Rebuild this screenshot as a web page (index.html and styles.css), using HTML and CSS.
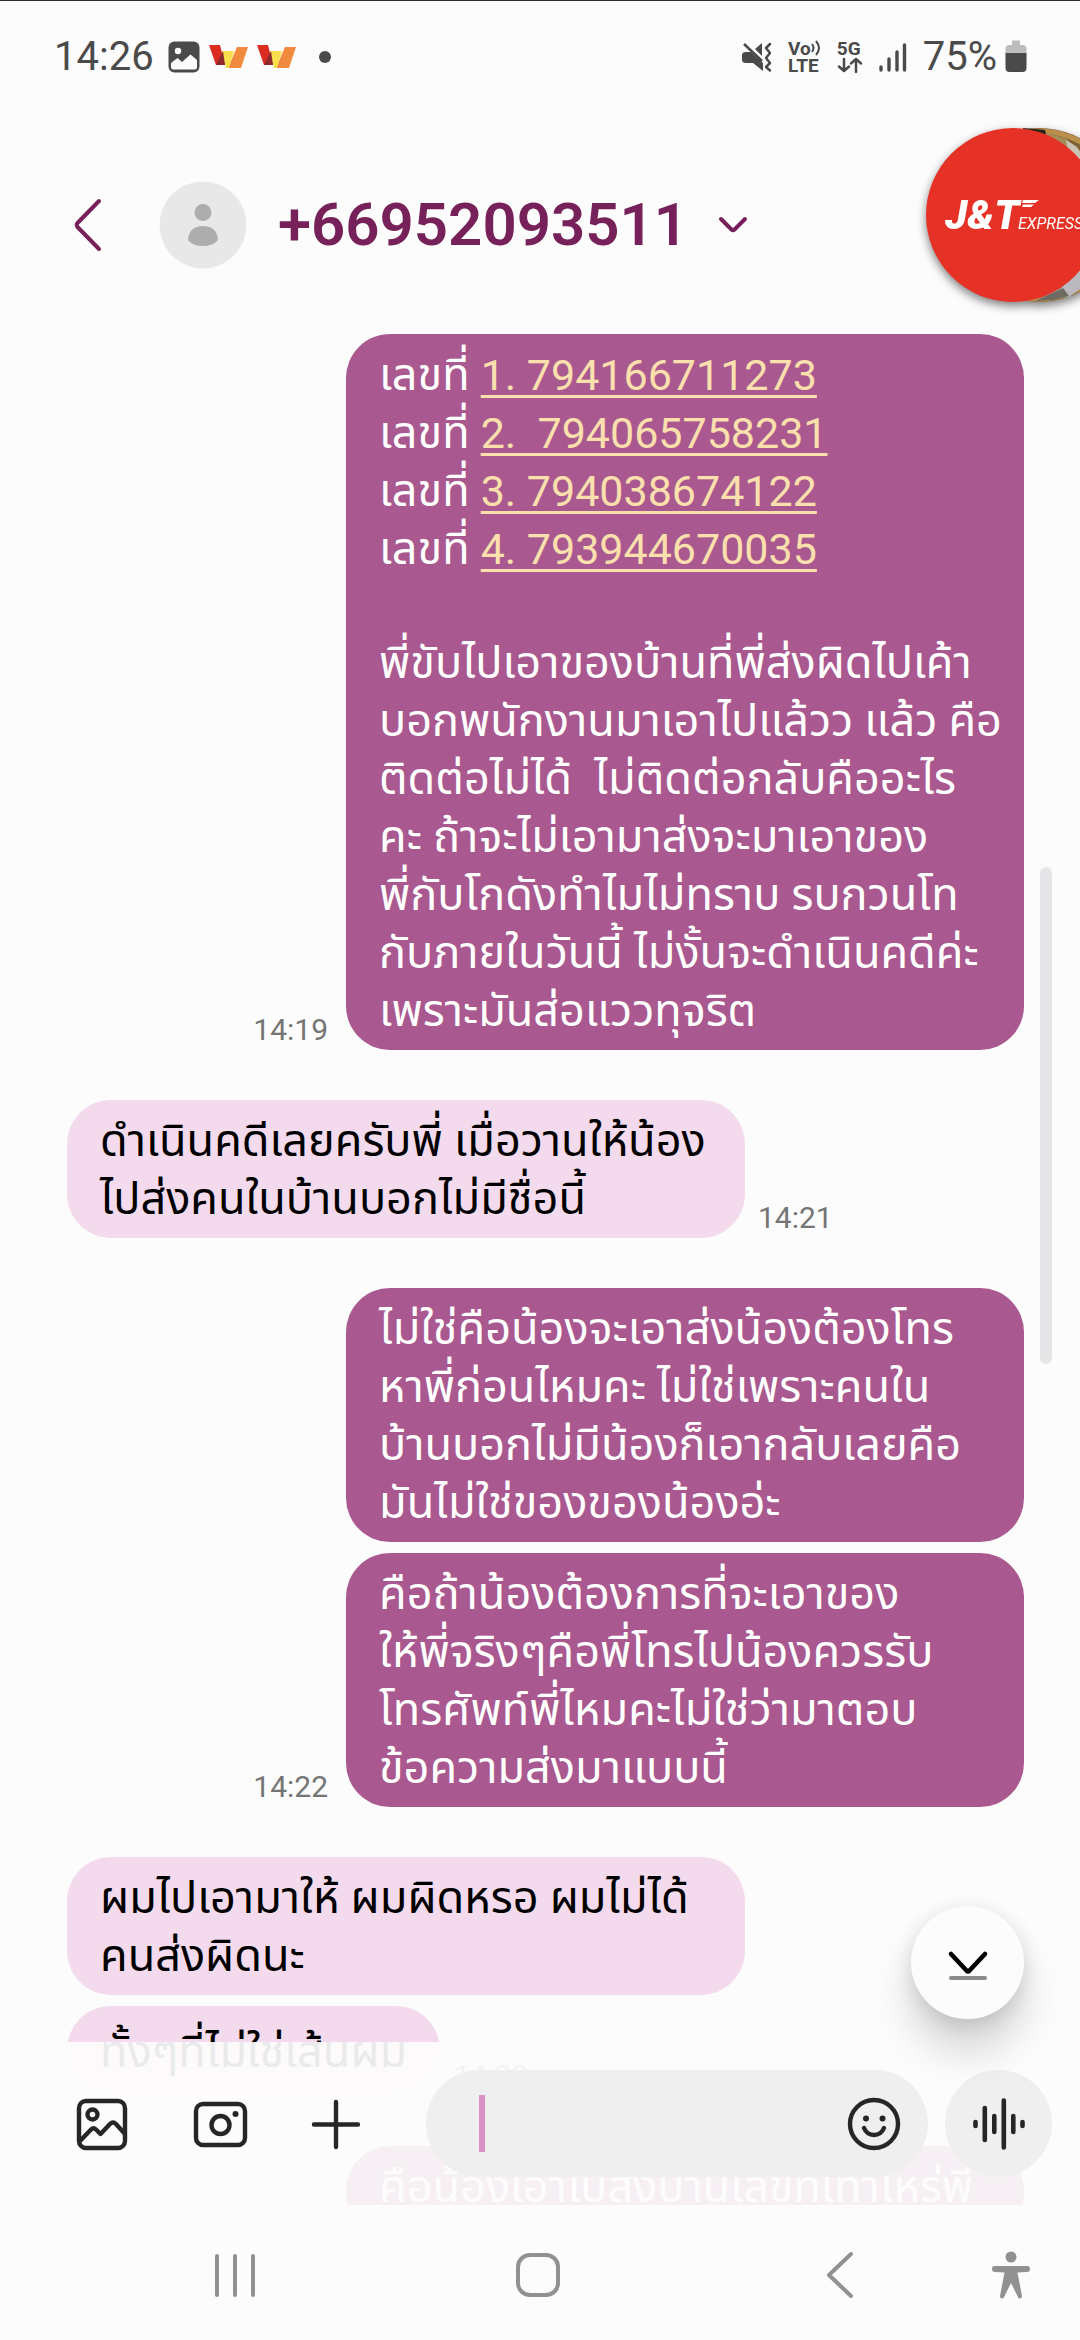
FILE: index.html
```html
<!DOCTYPE html>
<html lang="th">
<head>
<meta charset="utf-8">
<meta name="viewport" content="width=device-width, initial-scale=1">
<title>+66952093511</title>
<link rel="stylesheet" href="styles.css">
</head>
<body>
<div class="screen">
  <div class="status">
    <div class="status-side">
      <span class="clock">14:26</span>
      <svg class="s-image" width="32" height="32" viewBox="0 0 32 32"><rect width="31" height="31" x="0.5" y="0.5" rx="6" fill="#4a4a4a"/><circle cx="10" cy="10" r="3.2" fill="#fcfcfc"/><path d="M3 22 L9.500 17 L14 21 L22.500 13.500 L29 19 V26 Q29 28.500 26.500 28.500 H5.500 Q3 28.500 3 26 Z" fill="#fcfcfc"/></svg>
      <svg class="s-brand" width="39" height="24" viewBox="0 0 39 24"><path d="M28 2H39L32 23H19Z" fill="#f08a3e"/><path d="M13 6H25L20 23H17Z" fill="#f9df4b"/><path d="M0 0H11L16 20H7Z" fill="#da2c20"/><path d="M14 6L16 20H7Z" fill="#8f2a2a"/></svg>
      <svg class="s-brand" width="39" height="24" viewBox="0 0 39 24"><path d="M28 2H39L32 23H19Z" fill="#f08a3e"/><path d="M13 6H25L20 23H17Z" fill="#f9df4b"/><path d="M0 0H11L16 20H7Z" fill="#da2c20"/><path d="M14 6L16 20H7Z" fill="#8f2a2a"/></svg>
      <span class="dot"></span>
    </div>
    <div class="status-side status-right">
      <svg width="30" height="32" viewBox="0 0 30 32" fill="none"><path d="M13 8 L20 2 V15 Z M4 11 H9 L21 22 V30 L11 22 H4 Q0 22 0 19 V14 Q0 11 4 11Z" fill="#4a4a4a"/><path d="M2 3 L20 20" stroke="#4a4a4a" stroke-width="2.500"/><path d="M28 3 L24 7 L28 12 L24 17 L28 22 L24 26 L28 29.500" stroke="#4a4a4a" stroke-width="2.500" stroke-linejoin="round" stroke-linecap="round"/></svg>
      <span class="tiny"><span class="tiny-row">Vo<svg width="10" height="16" viewBox="0 0 10 16" fill="none" stroke="#4a4a4a" stroke-width="2"><path d="M1 4Q4 8 1 12M5 1Q11 8 5 15"/></svg></span><span class="tiny-row">LTE</span></span>
      <span class="tiny"><span class="tiny-row">5G</span><svg width="26" height="16" viewBox="0 0 26 16" fill="none" stroke="#4a4a4a" stroke-width="2.500" stroke-linecap="round" stroke-linejoin="round"><path d="M7 2V14M2 9.500L7 14L12 9.500M19 15V2M14 6.500L19 2L24 6.500"/></svg></span>
      <svg width="28" height="32" viewBox="0 0 28 32" stroke="#4a4a4a" stroke-width="3.400" stroke-linecap="round"><path d="M2 26V29M10 18V29M18 11V29M25.500 4V29"/></svg>
      <span class="charge">75%<svg width="22" height="33" viewBox="0 0 22 33"><path d="M7 0.500H15V5H18Q21.500 5 21.500 9V14H0.500V9Q0.500 5 4 5H7Z" fill="#bdbdbd"/><path d="M0.500 13H21.500V28Q21.500 32 17.500 32H4.500Q0.500 32 0.500 28Z" fill="#4a4a4a"/></svg></span>
    </div>
  </div>

  <header class="header">
    <button class="icon-btn back" aria-label="Back"><svg width="30" height="54" viewBox="0 0 30 54" fill="none" stroke="#762159" stroke-width="4" stroke-linecap="round" stroke-linejoin="round"><path d="M26 3L4.500 25Q3 27 4.500 29L26 51"/></svg></button>
    <svg class="avatar" width="88" height="88" viewBox="0 0 88 88"><circle cx="44" cy="44" r="43.500" fill="#e8e8e8"/><circle cx="44" cy="31.500" r="8.500" fill="#adadad"/><path d="M29 59Q30 45 44 45Q58 45 59 59Q54 65 44 65Q34 65 29 59Z" fill="#adadad"/></svg>
    <h1 class="title">+66952093511</h1>
    <button class="icon-btn" aria-label="Details"><svg width="32" height="20" viewBox="0 0 32 20" fill="none" stroke="#762159" stroke-width="4" stroke-linecap="round" stroke-linejoin="round"><path d="M4 4L14.500 14.500Q16 16 17.500 14.500L28 4"/></svg></button>
    <div class="chat-head">
      <svg width="204" height="190" viewBox="0 0 204 190">
        <circle cx="114" cy="95" r="87" fill="#7d6136"/>
        <circle cx="114" cy="95" r="84" fill="none" stroke="#b98f4a" stroke-width="5"/>
        <path d="M98 8L120 10L124 22L98 14Z" fill="#262417"/>
        <path d="M120 13L140 18L162 36V56L128 26Z" fill="#a58d58"/>
        <path d="M141 20L152 27L162 44V56L144 36Z" fill="#c9c3b6"/>
        <path d="M112 180L136 168L162 140V164L144 177Z" fill="#b9b9be"/>
        <path d="M110 181L138 168L144 176L128 180Z" fill="#6f6a62"/>
        <circle cx="88" cy="95" r="87" fill="#e63226"/>
        <path d="M98 80H114L110 83H97ZM98 84.500H109L106 87H97Z" fill="#fff"/>
        <text class="brand-main" x="20" y="109">J&amp;T</text>
        <text class="brand-small" x="93" y="109">EXPRESS</text>
      </svg>
    </div>
  </header>

  <main class="chat">
    <div class="messages">
      <section class="group out">
        <div class="row"><time>14:19</time><div class="bubble">
          <p>เลขที่ <a href="#n1">1. 794166711273</a><br>เลขที่ <a href="#n2">2.&nbsp; 794065758231</a><br>เลขที่ <a href="#n3">3. 794038674122</a><br>เลขที่ <a href="#n4">4. 793944670035</a></p>
          <p>พี่ขับไปเอาของบ้านที่พี่ส่งผิดไปเค้า<br>บอกพนักงานมาเอาไปแล้วว แล้ว คือ<br>ติดต่อไม่ได้&nbsp; ไม่ติดต่อกลับคืออะไร<br>คะ ถ้าจะไม่เอามาส่งจะมาเอาของ<br>พี่กับโกดังทำไมไม่ทราบ รบกวนโท<br>กับภายในวันนี้ ไม่งั้นจะดำเนินคดีค่ะ<br>เพราะมันส่อแววทุจริต</p></div></div>
      </section>
      <section class="group">
        <div class="row"><div class="bubble"><p>ดำเนินคดีเลยครับพี่ เมื่อวานให้น้อง<br>ไปส่งคนในบ้านบอกไม่มีชื่อนี้</p></div><time>14:21</time></div>
      </section>
      <section class="group out">
        <div class="row"><div class="bubble"><p>ไม่ใช่คือน้องจะเอาส่งน้องต้องโทร<br>หาพี่ก่อนไหมคะ ไม่ใช่เพราะคนใน<br>บ้านบอกไม่มีน้องก็เอากลับเลยคือ<br>มันไม่ใช่ของของน้องอ่ะ</p></div></div>
        <div class="row"><time>14:22</time><div class="bubble"><p>คือถ้าน้องต้องการที่จะเอาของ<br>ให้พี่จริงๆคือพี่โทรไปน้องควรรับ<br>โทรศัพท์พี่ไหมคะไม่ใช่ว่ามาตอบ<br>ข้อความส่งมาแบบนี้</p></div></div>
      </section>
      <section class="group">
        <div class="row"><div class="bubble"><p>ผมไปเอามาให้ ผมผิดหรอ ผมไม่ได้<br>คนส่งผิดนะ</p></div></div>
        <div class="row"><div class="bubble short"><p>ทั้งๆที่ไม่ใช่เส้นผม</p></div><time>14:22</time></div>
      </section>
      <section class="group out">
        <div class="row"><div class="bubble"><p>คือน้องเอาไปส่งบ้านเลขที่เท่าไหร่พี่</p></div></div>
      </section>
    </div>
    <div class="scroll-thumb"></div>
    <form class="composer">
      <button type="button" class="icon-btn tool" aria-label="Gallery"><svg width="54" height="54" viewBox="0 0 54 54" fill="none" stroke="#262626" stroke-width="4.400" stroke-linejoin="round"><rect x="4" y="4" width="46" height="47" rx="7"/><circle cx="17.500" cy="17.500" r="5"/><path d="M5 44L16 32.500Q18.500 30 21 32.500L25.500 37L35 27Q38 24 41 27L50 37"/></svg></button>
      <button type="button" class="icon-btn tool" aria-label="Camera"><svg width="58" height="54" viewBox="0 0 58 54" fill="none" stroke="#262626" stroke-width="4.400"><rect x="4" y="7" width="49" height="41" rx="7"/><circle cx="28.500" cy="28" r="9"/><circle cx="43.500" cy="17" r="3" fill="#262626" stroke="none"/></svg></button>
      <button type="button" class="icon-btn tool" aria-label="More"><svg width="54" height="54" viewBox="0 0 54 54" stroke="#262626" stroke-width="4.400" stroke-linecap="round"><path d="M27 5V50M5 27.500H49"/></svg></button>
      <div class="field">
        <span class="caret"></span>
        <input type="text" aria-label="Message">
        <button type="button" class="icon-btn" aria-label="Emoji"><svg width="56" height="56" viewBox="0 0 56 56" fill="none" stroke="#262626" stroke-width="4.400" stroke-linecap="round"><circle cx="28" cy="28" r="24"/><path d="M18 32Q21 39 28 39Q35 39 38 32"/><g fill="#262626" stroke="none"><circle cx="20" cy="22.500" r="3"/><circle cx="36.500" cy="22.500" r="3"/></g></svg></button>
      </div>
      <button type="button" class="voice" aria-label="Voice message"><svg width="56" height="56" viewBox="0 0 56 56" stroke="#262626" stroke-width="4.600" stroke-linecap="round"><path d="M4.500 26V30M13.800 12V44M23.300 20V36M32.800 4.500V51.500M42.300 20V36M51.500 26V30"/></svg></button>
    </form>
    <button type="button" class="to-bottom" aria-label="Go to latest"><svg width="44" height="34" viewBox="0 0 44 34" fill="none" stroke-width="4.600" stroke-linecap="round" stroke-linejoin="round"><path d="M5 5L20.500 21.500Q22 23 23.500 21.500L39 5" stroke="#000"/><path d="M5 29H39" stroke="#8a8a8a" stroke-width="4"/></svg></button>
  </main>

  <nav class="navbar">
    <button class="icon-btn nav-btn" aria-label="Recents"><svg width="48" height="48" viewBox="0 0 48 48" stroke="#919191" stroke-width="4" stroke-linecap="round"><path d="M5 5V44M23 5V44M41 5V44"/></svg></button>
    <button class="icon-btn nav-btn" aria-label="Home"><svg width="48" height="48" viewBox="0 0 48 48" fill="none" stroke="#919191" stroke-width="4"><rect x="4" y="4" width="40" height="40" rx="12"/></svg></button>
    <button class="icon-btn nav-btn" aria-label="Back"><svg width="30" height="48" viewBox="0 0 30 48" fill="none" stroke="#919191" stroke-width="4" stroke-linecap="round" stroke-linejoin="round"><path d="M26 3L4 24L26 45"/></svg></button>
    <button class="icon-btn nav-btn" aria-label="Accessibility"><svg width="40" height="48" viewBox="0 0 40 48"><circle cx="20" cy="6" r="5.500" fill="#919191"/><path d="M3.500 15H36.500Q39 15 39 18Q39 21 36 21L26.500 21.500L31 45Q31 47.500 29 47.500Q27 47.500 26.500 45L20 32L13.500 45Q13 47.500 11 47.500Q9 47.500 9 45L13.500 21.500L4 21Q1 21 1 18Q1 15 3.500 15Z" fill="#919191"/></svg></button>
  </nav>
</div>
</body>
</html>
```
FILE: styles.css
```css
* {
  box-sizing: border-box;
}

body {
  margin: 0;
  background: #fcfcfc;
  font-family: Roboto, "Noto Sans Thai", "Noto Sans", sans-serif;
}

button {
  padding: 0;
  border: 0;
  background: none;
  font: inherit;
}

svg {
  display: block;
}

.screen {
  display: flex;
  flex-direction: column;
  height: 100vh;
  overflow: hidden;
  border-top: 1px solid #2e2a2e;
}

.status {
  display: flex;
  flex: none;
  justify-content: space-between;
  height: 111px;
  padding: 0 53px 0 54px;
  color: #4a4a4a;
  font-size: 40px;
}

.status-side {
  display: flex;
  align-items: center;
  height: 111px;
}

.clock {
  line-height: 48px;
}

.s-image {
  margin-left: 14px;
}

.s-brand {
  margin-left: 9px;
}

.dot {
  width: 12px;
  height: 12px;
  margin-left: 23px;
  border-radius: 50%;
  background: #4a4a4a;
}

.status-right {
  gap: 16px;
}

.tiny {
  display: flex;
  flex-direction: column;
  font-size: 19px;
  font-weight: 700;
  line-height: 17px;
}

.tiny-row {
  display: flex;
}

.charge {
  display: flex;
  align-items: center;
  gap: 8px;
}

.header {
  position: relative;
  display: flex;
  flex: none;
  align-items: center;
  height: 222px;
  padding: 3px 0 0 73px;
  color: #762159;
}

.icon-btn {
  display: grid;
  place-items: center;
}

.avatar {
  margin-left: 56px;
}

.title {
  margin: 0 29px 0 31px;
  font-size: 60px;
  font-weight: 600;
  line-height: 72px;
}

.chat-head {
  position: absolute;
  top: 8px;
  right: -49px;
  filter: drop-shadow(0 4px 5px rgba(0, 0, 0, 0.5));
}

.brand-main {
  fill: #fff;
  font-size: 41px;
  font-style: italic;
  font-weight: 900;
}

.brand-small {
  fill: #fff;
  font-size: 16px;
  font-style: italic;
}

.chat {
  position: relative;
  flex: 1;
  min-height: 0;
  overflow: hidden;
}

.messages {
  display: flex;
  flex-direction: column;
  gap: 50px;
  padding: 0 56px 0 67px;
}

.group {
  display: flex;
  flex-direction: column;
  gap: 11px;
}

.row {
  display: flex;
  align-items: flex-end;
  gap: 13px;
}

.out .row {
  justify-content: flex-end;
  gap: 18px;
}

.bubble {
  flex: 0 1 678px;
  min-height: 90px;
  padding: 12px 10px 10px 33px;
  border-radius: 44px;
  background: #f3daec;
  color: #000;
  font-size: 45px;
  line-height: 58px;
}

.bubble p {
  margin: 0;
}

.bubble p + p {
  margin-top: 56px;
}

.out .bubble {
  background: #a9598f;
  color: #fff;
}

.bubble.short {
  flex: 0 1 auto;
  padding: 17px 33px 15px;
}

.bubble a {
  color: #fbe0ae;
  font-size: 43px;
  line-height: 48px;
  text-decoration-thickness: 3px;
  text-underline-offset: 5px;
}

time {
  flex: none;
  color: #757575;
  font-size: 30px;
  line-height: 40px;
}

.scroll-thumb {
  position: absolute;
  top: 533px;
  right: 28px;
  width: 12px;
  height: 497px;
  border-radius: 6px;
  background: #e6e6e8;
}

.composer {
  position: absolute;
  right: 0;
  bottom: 0;
  left: 0;
  display: flex;
  align-items: center;
  height: 163px;
  padding: 0 28px 0 75px;
  background: rgba(252, 252, 252, 0.93);
}

.tool {
  flex: none;
  width: 54px;
  margin-right: 63px;
}

.field {
  display: flex;
  flex: 1;
  align-items: center;
  min-width: 0;
  height: 107px;
  margin-right: 17px;
  padding: 0 26px 0 53px;
  border-radius: 54px;
  background: #efefef;
}

.field input {
  flex: 1;
  min-width: 0;
  border: 0;
  outline: 0;
  background: none;
  font: inherit;
  font-size: 43px;
}

.caret {
  width: 6px;
  height: 57px;
  background: #da92c5;
}

.voice {
  display: grid;
  flex: none;
  place-items: center;
  width: 107px;
  height: 107px;
  border-radius: 50%;
  background: #efefef;
}

.to-bottom {
  position: absolute;
  right: 56px;
  bottom: 186px;
  display: grid;
  place-items: center;
  width: 113px;
  height: 113px;
  padding-top: 6px;
  border-radius: 50%;
  background: #fcfcfc;
  box-shadow: 0 32px 40px rgba(0, 0, 0, 0.16), 0 4px 20px rgba(0, 0, 0, 0.12);
}

.navbar {
  display: grid;
  flex: none;
  grid-template-columns: 260fr 302fr 293fr 176fr 49fr;
  align-items: center;
  height: 135px;
  padding-top: 4px;
}

.nav-btn {
  justify-self: end;
}
```
